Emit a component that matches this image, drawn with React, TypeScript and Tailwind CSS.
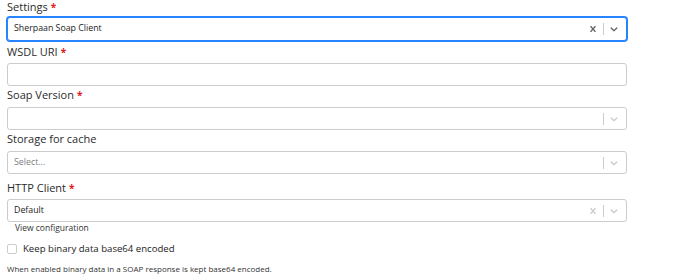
import React from "react";

const font = { fontFamily: "'Open Sans', 'DejaVu Sans', sans-serif" };

function CrossIcon({ color }: { color: string }) {
  return (
    <svg width="12" height="12" viewBox="0 0 20 20" fill={color} aria-hidden="true">
      <path d="M14.348 14.849c-0.469 0.469-1.229 0.469-1.697 0l-2.651-3.030-2.651 3.029c-0.469 0.469-1.229 0.469-1.697 0-0.469-0.469-0.469-1.229 0-1.697l2.758-3.15-2.759-3.152c-0.469-0.469-0.469-1.228 0-1.697s1.228-0.469 1.697 0l2.652 3.031 2.651-3.031c0.469-0.469 1.228-0.469 1.697 0s0.469 1.229 0 1.697l-2.758 3.152 2.758 3.15c0.469 0.469 0.469 1.229 0 1.698z" />
    </svg>
  );
}

function ChevronIcon({ color }: { color: string }) {
  return (
    <svg width="12" height="12" viewBox="0 0 20 20" fill={color} aria-hidden="true">
      <path d="M4.516 7.548c0.436-0.446 1.043-0.481 1.576 0l3.908 3.747 3.908-3.747c0.533-0.481 1.141-0.446 1.574 0 0.436 0.445 0.408 1.197 0 1.615-0.406 0.418-4.695 4.502-4.695 4.502-0.217 0.223-0.502 0.335-0.787 0.335s-0.57-0.112-0.789-0.335c0 0-4.287-4.084-4.695-4.502s-0.436-1.17 0-1.615z" />
    </svg>
  );
}

function Label({ text, required, className }: { text: string; required?: boolean; className: string }) {
  return (
    <div className={`h-[12px] leading-[12px] text-[11px] text-[#2b2b2b] ${className}`}>
      {text}
      {required && <span className="text-[#e02020] text-[10px] font-bold ml-[3px]">*</span>}
    </div>
  );
}

function Select({
  value,
  placeholder,
  focused,
  clearable,
  className,
}: {
  value?: string;
  placeholder?: string;
  focused?: boolean;
  clearable?: boolean;
  className: string;
}) {
  const iconColor = focused ? "#666" : "#ccc";
  return (
    <div
      className={`flex items-center rounded-[3px] border bg-white ${
        focused ? "border-[#2684ff] shadow-[0_0_0_1px_#2684ff]" : "border-[#cccccc]"
      } ${className}`}
    >
      <div className="flex-1 pl-[6px] text-[8.8px]">
        {value ? (
          <span className="text-[#222] font-medium">{value}</span>
        ) : (
          <span className="text-[#808080]">{placeholder}</span>
        )}
      </div>
      <div className="flex items-center h-full pr-[2px]">
        {clearable && (
          <div className="w-[20px] flex justify-center">
            <CrossIcon color={iconColor} />
          </div>
        )}
        <div className="w-px h-[12px] bg-[#ccc]" />
        <div className="w-[20px] flex justify-center">
          <ChevronIcon color={iconColor} />
        </div>
      </div>
    </div>
  );
}

export default function App() {
  return (
    <div className="w-[690px] h-[280px] bg-white overflow-hidden" style={font}>
      <div className="flex flex-col w-[627px] pl-[7px] pt-[1px]">
        <Label text="Settings" required className="mt-0" />
        <Select value="Sherpaan Soap Client" focused clearable className="mt-[4px] h-[24px]" />

        <Label text="WSDL URI" required className="mt-[5px]" />
        <input className="mt-[5px] h-[23px] rounded-[3px] border border-[#cccccc] bg-white outline-none" />

        <Label text="Soap Version" required className="mt-[3px]" />
        <Select className="mt-[6px] h-[23px]" />

        <Label text="Storage for cache" className="mt-[3px]" />
        <Select placeholder="Select..." className="mt-[6px] h-[23px]" />

        <Label text="HTTP Client" required className="mt-[8px]" />
        <Select value="Default" clearable className="mt-[5px] h-[23px]" />

        <a className="ml-[8px] mt-[1px] h-[10px] leading-[10px] text-[8.5px] text-[#333]">View configuration</a>

        <label className="flex items-center mt-[11px] h-[10px]">
          <span className="w-[10px] h-[10px] rounded-[2px] border border-[#cccccc] bg-white" />
          <span className="ml-[6px] text-[9.6px] leading-[12px] text-[#222] font-medium">Keep binary data base64 encoded</span>
        </label>

        <p className="mt-[10px] h-[10px] leading-[10px] text-[8px] text-[#333]">
          When enabled binary data in a SOAP response is kept base64 encoded.
        </p>
      </div>
    </div>
  );
}
